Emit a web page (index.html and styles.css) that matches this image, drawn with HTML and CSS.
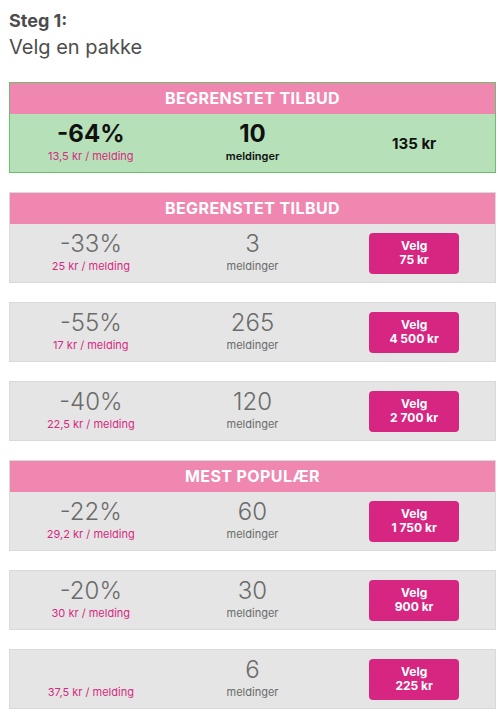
FILE: index.html
```html
<!DOCTYPE html>
<html lang="no">
<head>
    <meta charset="UTF-8">
    <meta name="viewport" content="width=device-width, initial-scale=1.0">
    <title>Velg en pakke</title>
    <link rel="stylesheet" href="styles.css">
</head>
<body>
    <h1 class="steg">
        <span class="steg-nr">Steg 1:</span>
        <span class="steg-tekst">Velg en pakke</span>
    </h1>

    <div class="pakke tilbud">
        <div class="pakke-topp">Begrenstet tilbud</div>
        <div class="pakke-rad">
            <div class="kol tall">
                <span class="stor">-64%</span>
                <span class="pris-per">13,5 kr / melding</span>
            </div>
            <div class="kol tall">
                <span class="stor">10</span>
                <span class="enhet">meldinger</span>
            </div>
            <div class="kol">
                <span class="totalt">135 kr</span>
            </div>
        </div>
    </div>

    <div class="pakke">
        <div class="pakke-topp">Begrenstet tilbud</div>
        <div class="pakke-rad">
            <div class="kol tall">
                <span class="stor">-33%</span>
                <span class="pris-per">25 kr / melding</span>
            </div>
            <div class="kol tall">
                <span class="stor">3</span>
                <span class="enhet">meldinger</span>
            </div>
            <div class="kol">
                <button class="velg">Velg<br>75 kr</button>
            </div>
        </div>
    </div>

    <div class="pakke">
        <div class="pakke-rad">
            <div class="kol tall">
                <span class="stor">-55%</span>
                <span class="pris-per">17 kr / melding</span>
            </div>
            <div class="kol tall">
                <span class="stor">265</span>
                <span class="enhet">meldinger</span>
            </div>
            <div class="kol">
                <button class="velg">Velg<br>4&nbsp;500 kr</button>
            </div>
        </div>
    </div>

    <div class="pakke">
        <div class="pakke-rad">
            <div class="kol tall">
                <span class="stor">-40%</span>
                <span class="pris-per">22,5 kr / melding</span>
            </div>
            <div class="kol tall">
                <span class="stor">120</span>
                <span class="enhet">meldinger</span>
            </div>
            <div class="kol">
                <button class="velg">Velg<br>2&nbsp;700 kr</button>
            </div>
        </div>
    </div>

    <div class="pakke">
        <div class="pakke-topp">Mest populær</div>
        <div class="pakke-rad">
            <div class="kol tall">
                <span class="stor">-22%</span>
                <span class="pris-per">29,2 kr / melding</span>
            </div>
            <div class="kol tall">
                <span class="stor">60</span>
                <span class="enhet">meldinger</span>
            </div>
            <div class="kol">
                <button class="velg">Velg<br>1&nbsp;750 kr</button>
            </div>
        </div>
    </div>

    <div class="pakke">
        <div class="pakke-rad">
            <div class="kol tall">
                <span class="stor">-20%</span>
                <span class="pris-per">30 kr / melding</span>
            </div>
            <div class="kol tall">
                <span class="stor">30</span>
                <span class="enhet">meldinger</span>
            </div>
            <div class="kol">
                <button class="velg">Velg<br>900 kr</button>
            </div>
        </div>
    </div>

    <div class="pakke">
        <div class="pakke-rad">
            <div class="kol tall">
                <span class="stor">&nbsp;</span>
                <span class="pris-per">37,5 kr / melding</span>
            </div>
            <div class="kol tall">
                <span class="stor">6</span>
                <span class="enhet">meldinger</span>
            </div>
            <div class="kol">
                <button class="velg">Velg<br>225 kr</button>
            </div>
        </div>
    </div>
</body>
</html>
```

FILE: styles.css
```css
body {
    margin: 0;
    padding: 0 8px 0 9px;
    font-family: Inter, "Open Sans", Arial, sans-serif;
    color: #4d4d4d;
    background-color: #ffffff;
}

.steg {
    margin: 0;
    padding-top: 8px;
    height: 74px;
    font-weight: normal;
}

.steg-nr {
    display: block;
    font-size: 18px;
    font-weight: bold;
    line-height: 25px;
}

.steg-tekst {
    display: block;
    font-size: 20px;
    line-height: 29px;
}

.pakke {
    border: 1px solid #d8d9d8;
    background-color: #e4e5e4;
    margin-bottom: 19px;
}

.pakke-topp {
    background-color: #f087b1;
    color: #ffffff;
    font-weight: bold;
    font-size: 16px;
    letter-spacing: 0.4px;
    text-align: center;
    text-transform: uppercase;
    height: 31px;
    line-height: 31px;
}

.pakke-rad {
    display: grid;
    grid-template-columns: 1fr 1fr 1fr;
    align-items: center;
    height: 58px;
}

.kol {
    display: flex;
    flex-direction: column;
    align-items: center;
    text-align: center;
}

.tall {
    margin-bottom: 4px;
}

.stor {
    font-size: 24px;
    font-weight: 300;
    line-height: 30px;
    color: #6b6b6b;
}

.pris-per {
    font-size: 11px;
    line-height: 14px;
    color: #d62a83;
}

.enhet {
    font-size: 11px;
    line-height: 14px;
    color: #6b6b6b;
}

.velg {
    width: 90px;
    height: 41px;
    border: none;
    border-radius: 4px;
    background-color: #d62682;
    color: #ffffff;
    font-family: inherit;
    font-weight: bold;
    font-size: 12px;
    line-height: 14px;
    cursor: pointer;
}

.tilbud {
    border-color: #6cbf6c;
    background-color: #b6e0b8;
}

.tilbud .stor {
    font-weight: bold;
    color: #111111;
}

.tilbud .enhet {
    font-weight: 600;
    color: #111111;
}

.totalt {
    font-size: 15px;
    font-weight: bold;
    color: #111111;
}
```
